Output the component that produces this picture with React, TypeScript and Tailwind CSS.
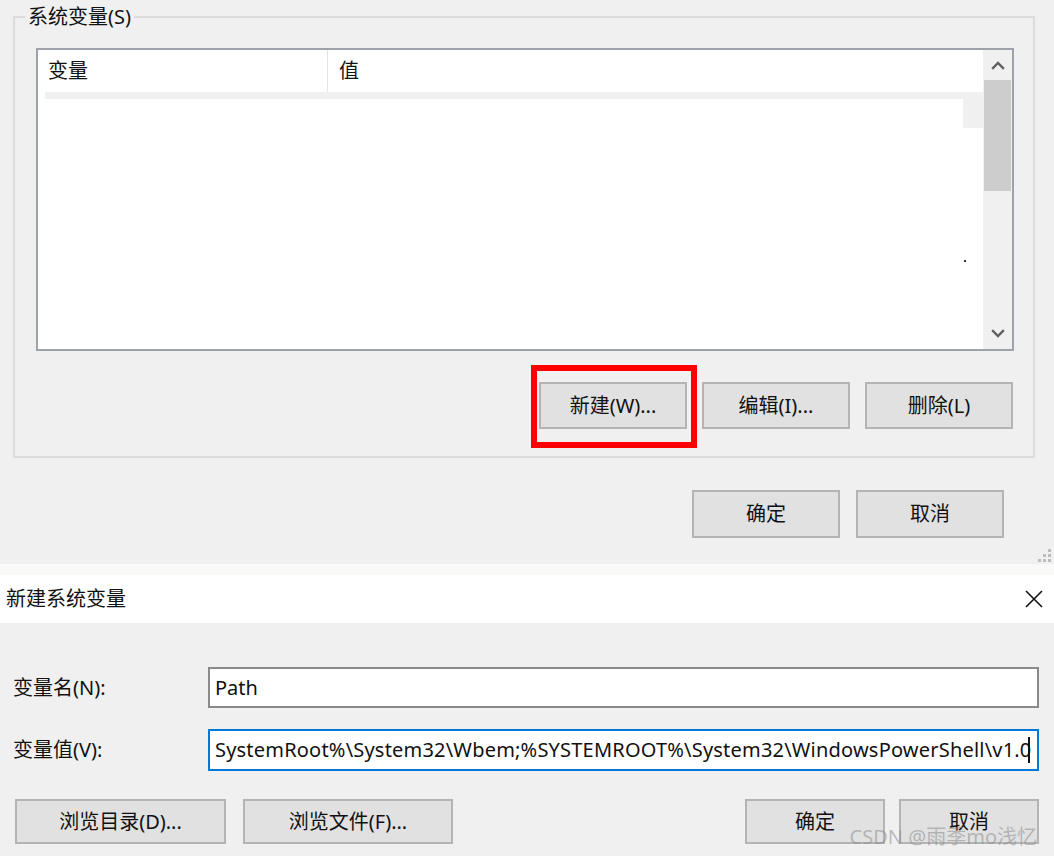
import React from "react";

const font = "font-['Noto_Sans','Noto_Sans_CJK_SC',sans-serif]";

function WinButton({ label, className = "" }: { label: string; className?: string }) {
  return (
    <div
      className={`flex items-center justify-center border-2 border-[#b4b4b4] bg-[#e1e1e1] text-[20px] text-[#111] ${className}`}
    >
      {label}
    </div>
  );
}

function Chevron({ up }: { up?: boolean }) {
  return (
    <svg width="14" height="10" viewBox="0 0 14 10">
      <path
        d={up ? "M2 8 L7 3 L12 8" : "M2 2 L7 7 L12 2"}
        fill="none"
        stroke="#606060"
        strokeWidth="2.4"
        strokeLinecap="square"
      />
    </svg>
  );
}

function SystemVariables() {
  return (
    <div className="relative h-[564px] bg-[#f0f0f0] pl-[13px] pr-[19px]">
      <fieldset className="mt-[3px] border-2 border-[#dcdcdc] pt-[17px] pb-[27px]">
        <legend className="ml-[10px] px-[3px] text-[20px] leading-[28px] text-[#111]">系统变量(S)</legend>

        <div className="pl-[21px] pr-[19px]">
          {/* list view */}
          <div className="flex h-[303px] border-2 border-[#9ea3ab] bg-white">
            <div className="relative flex flex-1 flex-col">
              <div className="flex h-[42px] items-center pr-[2px] text-[20px] text-[#111]">
                <div className="flex h-full w-[290px] items-center border-r border-[#e5e5e5] pl-[10px]">变量</div>
                <div className="pl-[11px]">值</div>
              </div>
              <div className="flex flex-1 flex-col pl-[7px]">
                <div className="flex">
                  <div className="h-[7px] flex-1 bg-[#f0f0f0]" />
                </div>
                <div className="flex">
                  <div className="flex-1" />
                  <div className="mt-[-7px] h-[36px] w-[20px] bg-[#f0f0f0]" />
                </div>
              </div>
              <div className="absolute left-[926px] top-[210px] h-[2px] w-[2px] bg-[#333]" />
            </div>
            {/* scrollbar */}
            <div className="flex w-[29px] flex-col bg-[#f0f0f0]">
              <div className="flex h-[30px] items-center justify-center">
                <Chevron up />
              </div>
              <div className="mx-[1px] h-[111px] bg-[#cdcdcd]" />
              <div className="flex-1" />
              <div className="flex h-[30px] items-center justify-center">
                <Chevron />
              </div>
            </div>
          </div>

          {/* buttons */}
          <div className="mt-[31px] mr-[1px] flex justify-end gap-[15px]">
            <div className="relative">
              <WinButton label="新建(W)..." className="h-[47px] w-[148px]" />
              <div className="absolute -left-[8px] -right-[10px] -top-[17px] -bottom-[19px] border-[6px] border-[#ff0000]" />
            </div>
            <WinButton label="编辑(I)..." className="h-[47px] w-[148px]" />
            <WinButton label="删除(L)" className="h-[47px] w-[148px]" />
          </div>
        </div>
      </fieldset>

      <div className="mt-[32px] flex justify-end gap-[16px] pr-[31px]">
        <WinButton label="确定" className="h-[48px] w-[148px]" />
        <WinButton label="取消" className="h-[48px] w-[148px]" />
      </div>

      {/* resize grip */}
      <svg className="absolute bottom-[2px] right-[3px]" width="14" height="14" viewBox="0 0 14 14">
        {[
          [11, 1],
          [6, 6],
          [11, 6],
          [1, 11],
          [6, 11],
          [11, 11],
        ].map(([x, y], i) => (
          <rect key={i} x={x} y={y} width="3" height="3" fill="#bdbdbd" />
        ))}
      </svg>
    </div>
  );
}

function NewVariableDialog() {
  return (
    <div className="flex flex-1 flex-col">
      <div className="h-[11px] bg-[#f9f9f8]" />
      <div className="flex h-[48px] items-center justify-between bg-white pl-[6px] pr-[10px]">
        <span className="text-[20px] text-[#111]">新建系统变量</span>
        <svg width="20" height="20" viewBox="0 0 20 20">
          <path d="M2 2 L18 18 M18 2 L2 18" stroke="#111" strokeWidth="1.6" fill="none" />
        </svg>
      </div>
      <div className="flex flex-1 flex-col bg-[#f0f0f0] pt-[44px] pl-[13px] pr-[15px]">
        <div className="flex h-[41px] items-center">
          <div className="w-[195px] text-[20px] text-[#111]">变量名(N):</div>
          <div className="flex h-full flex-1 items-center border-2 border-[#8a8a8a] bg-white pl-[5px] text-[20px] text-[#111]">
            Path
          </div>
        </div>
        <div className="mt-[21px] flex h-[42px] items-center">
          <div className="w-[195px] text-[20px] text-[#111]">变量值(V):</div>
          <div className="flex h-full flex-1 items-center overflow-hidden whitespace-nowrap border-2 border-[#0078d7] bg-white pl-[5px] text-[20px] tracking-[0.2px] text-[#111]">
            <span>SystemRoot%\System32\Wbem;%SYSTEMROOT%\System32\WindowsPowerShell\v1.0</span>
            <span className="ml-[-3px] h-[26px] w-[2px] shrink-0 bg-[#111]" />
          </div>
        </div>
        <div className="relative mt-[28px] flex h-[45px] pl-[2px]">
          <WinButton label="浏览目录(D)..." className="h-full w-[211px]" />
          <WinButton label="浏览文件(F)..." className="ml-[17px] h-full w-[210px]" />
          <div className="flex-1" />
          <WinButton label="确定" className="h-full w-[140px]" />
          <WinButton label="取消" className="ml-[14px] h-full w-[140px]" />
          <span className="absolute bottom-[-3px] right-[2px] text-[20px] leading-none text-[rgba(140,140,140,0.55)]">
            CSDN @雨季mo浅忆
          </span>
        </div>
      </div>
    </div>
  );
}

export default function App() {
  return (
    <div className={`flex h-[856px] w-[1054px] flex-col overflow-hidden bg-[#f0f0f0] ${font}`}>
      <SystemVariables />
      <NewVariableDialog />
    </div>
  );
}
